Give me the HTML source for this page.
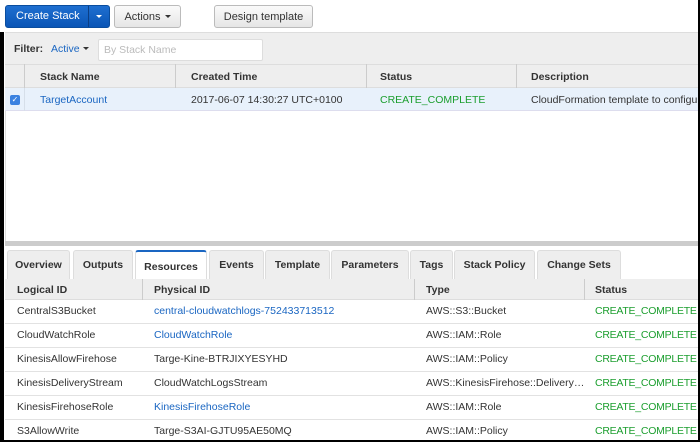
<!DOCTYPE html><html><head><style>
*{margin:0;padding:0;box-sizing:border-box}
body{width:700px;height:442px;overflow:hidden;background:#fff;font-family:"Liberation Sans",Arial,sans-serif;font-size:10.5px;color:#333;position:relative}
.a{position:absolute;white-space:nowrap}
.btn{position:absolute;border:1px solid #bbb;border-radius:3px;background:linear-gradient(#fafafa,#e6e6e6);color:#333;font-size:11px;display:flex;align-items:center;justify-content:center}
.link{color:#1a66c2}
.ok{color:#1b9e2e;letter-spacing:-0.25px}
.b{font-weight:bold}
.vl{position:absolute;width:1px;background:#ccc}
.hl{position:absolute;height:1px;background:#e2e2e2}
.tab{position:absolute;top:250px;height:29px;background:#eee;border:1px solid #ddd;border-bottom:none;border-radius:3px 3px 0 0;font-weight:bold;font-size:10.5px;display:flex;align-items:center;justify-content:center;color:#333}
</style></head><body>
<div class="a" style="left:0;top:32px;width:4px;height:410px;background:#000"></div>
<div class="a" style="right:0;top:0;width:2px;height:442px;background:#000;z-index:2"></div>
<div class="a" style="left:0;top:440px;width:700px;height:2px;background:#000"></div>

<div class="a" style="left:5px;top:5px;width:105px;height:23px;border-radius:3px;background:linear-gradient(#1f6fd0,#0a55b6);border:1px solid #0a4d9e"></div>
<div class="a" style="left:88px;top:6px;width:1px;height:21px;background:#0b3f85"></div>
<div class="a" style="left:16px;top:10px;color:#fff;font-size:11px">Create Stack</div>
<div class="a" style="left:96px;top:15px;border-left:3px solid transparent;border-right:3px solid transparent;border-top:3px solid #fff"></div>
<div class="btn" style="left:114px;top:5px;width:67px;height:23px">Actions <span style="display:inline-block;margin-left:4px;border-left:3px solid transparent;border-right:3px solid transparent;border-top:3px solid #333"></span></div>
<div class="btn" style="left:214px;top:5px;width:99px;height:23px">Design template</div>

<div class="a" style="left:5px;top:32px;width:693px;height:32px;background:#eee;border-top:1px solid #ddd"></div>
<div class="a b" style="left:14px;top:43px">Filter:</div>
<div class="a link" style="left:51px;top:43px">Active <span style="display:inline-block;vertical-align:2px;border-left:3px solid transparent;border-right:3px solid transparent;border-top:3px solid #333"></span></div>
<div class="a" style="left:98px;top:39px;width:165px;height:22px;background:#fff;border:1px solid #ddd;border-radius:2px;color:#bbb;padding:4px 5px">By Stack Name</div>

<div class="a" style="left:5px;top:64px;width:693px;height:24px;background:#eee;border-top:1px solid #ddd;border-bottom:1px solid #ddd"></div>
<div class="vl" style="left:24px;top:64px;height:24px"></div>
<div class="vl" style="left:175px;top:64px;height:24px"></div>
<div class="vl" style="left:366px;top:64px;height:24px"></div>
<div class="vl" style="left:516px;top:64px;height:24px"></div>
<div class="a b" style="left:40px;top:71px">Stack Name</div>
<div class="a b" style="left:191px;top:71px">Created Time</div>
<div class="a b" style="left:380px;top:71px">Status</div>
<div class="a b" style="left:531px;top:71px">Description</div>

<div class="a" style="left:5px;top:88px;width:693px;height:23px;background:#e8f1fb;border-bottom:1px solid #dde"></div>
<div class="vl" style="left:24px;top:88px;height:23px;background:#d6dfe9"></div>
<div class="a" style="left:10px;top:95px;width:10px;height:10px;border-radius:2px;background:#3b82e0;color:#fff;font-size:8px;line-height:10px;text-align:center">✓</div>
<div class="a link" style="left:40px;top:94px">TargetAccount</div>
<div class="a" style="left:191px;top:94px">2017-06-07 14:30:27 UTC+0100</div>
<div class="a ok" style="left:380px;top:94px;letter-spacing:0">CREATE_COMPLETE</div>
<div class="a" style="left:531px;top:94px">CloudFormation template to configu</div>
<div class="a" style="left:5px;top:111px;width:1px;height:131px;background:#ddd"></div>

<div class="a" style="left:5px;top:241px;width:693px;height:5px;background:#ccc"></div>

<div class="tab" style="left:7px;width:63px">Overview</div>
<div class="tab" style="left:73px;width:60px">Outputs</div>
<div class="tab" style="left:135px;top:250px;width:72px;height:30px;background:#fff;border-top:2px solid #1a66c2;align-items:flex-end;padding-bottom:7px">Resources</div>
<div class="tab" style="left:209px;width:55px">Events</div>
<div class="tab" style="left:265px;width:65px">Template</div>
<div class="tab" style="left:331px;width:78px">Parameters</div>
<div class="tab" style="left:410px;width:43px">Tags</div>
<div class="tab" style="left:454px;width:81px">Stack Policy</div>
<div class="tab" style="left:537px;width:84px">Change Sets</div>

<div class="a" style="left:5px;top:279px;width:693px;height:21px;background:#eee;border-bottom:1px solid #ddd"></div>
<div class="vl" style="left:142px;top:279px;height:21px"></div>
<div class="vl" style="left:414px;top:279px;height:21px"></div>
<div class="vl" style="left:584px;top:279px;height:21px"></div>
<div class="a b" style="left:17px;top:284px">Logical ID</div>
<div class="a b" style="left:154px;top:284px">Physical ID</div>
<div class="a b" style="left:426px;top:284px">Type</div>
<div class="a b" style="left:595px;top:284px">Status</div>

<div class="hl" style="left:5px;top:323px;width:693px"></div>
<div class="hl" style="left:5px;top:347px;width:693px"></div>
<div class="hl" style="left:5px;top:371px;width:693px"></div>
<div class="hl" style="left:5px;top:395px;width:693px"></div>
<div class="hl" style="left:5px;top:419px;width:693px"></div>

<div class="a" style="left:17px;top:305px">CentralS3Bucket</div>
<div class="a link" style="left:154px;top:305px">central-cloudwatchlogs-752433713512</div>
<div class="a" style="left:426px;top:305px">AWS::S3::Bucket</div>
<div class="a ok" style="left:595px;top:305px">CREATE_COMPLETE</div>

<div class="a" style="left:17px;top:329px">CloudWatchRole</div>
<div class="a link" style="left:154px;top:329px">CloudWatchRole</div>
<div class="a" style="left:426px;top:329px">AWS::IAM::Role</div>
<div class="a ok" style="left:595px;top:329px">CREATE_COMPLETE</div>

<div class="a" style="left:17px;top:353px">KinesisAllowFirehose</div>
<div class="a" style="left:154px;top:353px">Targe-Kine-BTRJIXYESYHD</div>
<div class="a" style="left:426px;top:353px">AWS::IAM::Policy</div>
<div class="a ok" style="left:595px;top:353px">CREATE_COMPLETE</div>

<div class="a" style="left:17px;top:377px">KinesisDeliveryStream</div>
<div class="a" style="left:154px;top:377px">CloudWatchLogsStream</div>
<div class="a" style="left:426px;top:377px">AWS::KinesisFirehose::Delivery…</div>
<div class="a ok" style="left:595px;top:377px">CREATE_COMPLETE</div>

<div class="a" style="left:17px;top:401px">KinesisFirehoseRole</div>
<div class="a link" style="left:154px;top:401px">KinesisFirehoseRole</div>
<div class="a" style="left:426px;top:401px">AWS::IAM::Role</div>
<div class="a ok" style="left:595px;top:401px">CREATE_COMPLETE</div>

<div class="a" style="left:17px;top:425px">S3AllowWrite</div>
<div class="a" style="left:154px;top:425px">Targe-S3AI-GJTU95AE50MQ</div>
<div class="a" style="left:426px;top:425px">AWS::IAM::Policy</div>
<div class="a ok" style="left:595px;top:425px">CREATE_COMPLETE</div>
</body></html>
